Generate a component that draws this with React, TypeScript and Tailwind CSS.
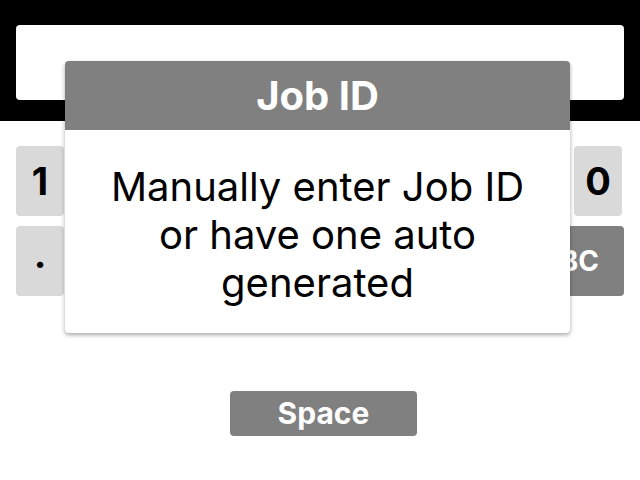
export default function App() {
  const digits = ['1', '2', '3', '4', '5', '6', '7', '8', '9', '0']
  const second = ['.', '-', '_', '/', '#', '@', '&']

  return (
    <div className="relative w-[640px] h-[480px] bg-white overflow-hidden font-['Inter',sans-serif]">
      {/* Input bar */}
      <div className="bg-black px-4 pt-[25px] pb-[21px]">
        <div className="h-[75px] bg-white rounded" />
      </div>

      {/* Keyboard */}
      <div className="px-4 pt-[25px] flex flex-col gap-[10px]">
        <div className="flex gap-[14px]">
          {digits.map((d) => (
            <div
              key={d}
              className="w-[48px] h-[70px] rounded bg-[#d9d9d9] flex items-center justify-center text-[38px] font-bold text-black"
            >
              {d}
            </div>
          ))}
        </div>
        <div className="flex gap-[14px]">
          {second.map((d) => (
            <div
              key={d}
              className="w-[48px] h-[70px] rounded bg-[#d9d9d9] flex items-center justify-center pb-[14px] text-[38px] font-bold text-black"
            >
              {d}
            </div>
          ))}
          <div className="flex-1 h-[70px] rounded bg-[#808080] flex items-center justify-center pl-[64px] text-[28px] font-bold text-white">
            ABC
          </div>
        </div>
        <div className="flex justify-center pl-[7px] pt-[85px]">
          <div className="w-[187px] h-[45px] rounded bg-[#808080] flex items-center justify-center text-[30px] font-bold text-white">
            Space
          </div>
        </div>
      </div>

      {/* Dialog */}
      <div className="absolute left-[65px] top-[61px] w-[505px] h-[272px] bg-white rounded shadow-[0_2px_4px_rgba(0,0,0,0.35)] overflow-hidden">
        <div className="h-[69px] bg-[#808080] flex items-center justify-center text-[40px] font-bold text-white">
          Job ID
        </div>
        <div className="pt-[33px] px-4 text-center text-[40px] leading-[48px] text-black">
          Manually enter Job ID
          <br />
          or have one auto
          <br />
          generated
        </div>
      </div>
    </div>
  )
}
